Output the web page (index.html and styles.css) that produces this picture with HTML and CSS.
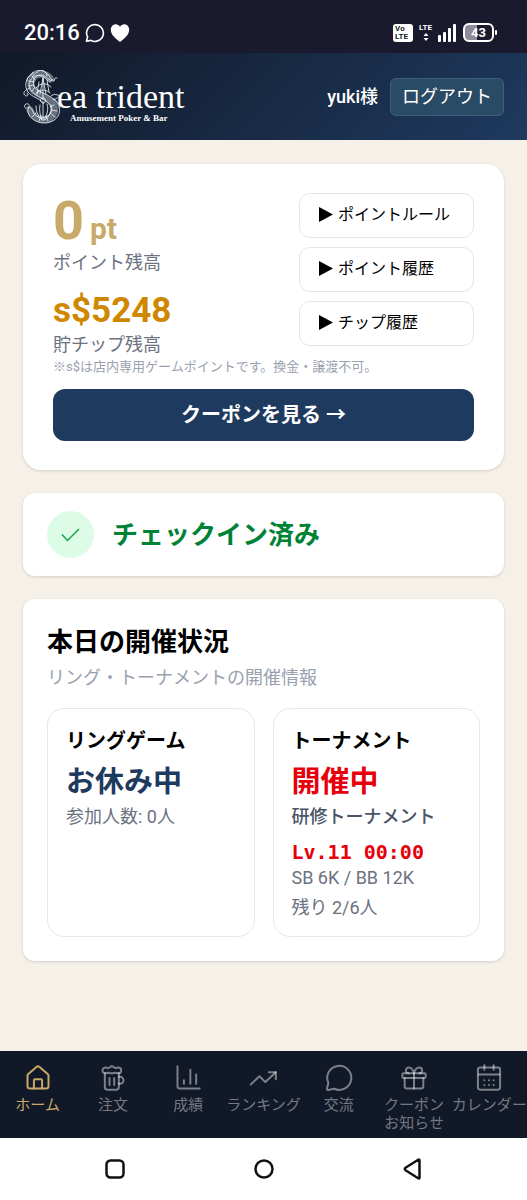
FILE: index.html
```html
<!DOCTYPE html>
<html lang="ja">
<head>
<meta charset="utf-8">
<meta name="viewport" content="width=device-width, initial-scale=1">
<title>Sea trident</title>
<link rel="stylesheet" href="styles.css">
</head>
<body>
<div class="status-bar">
  <div class="status-group">
    <span class="clock">20:16</span>
    <svg width="20" height="20" viewBox="0 0 20 20" fill="none" stroke="#fff" stroke-width="1.6" stroke-linejoin="round"><path d="M1.4 18.2 2.6 14A8.4 8.4 0 1 1 6 17.4Z"/></svg>
    <svg width="20" height="20" viewBox="0 0 20 20" fill="#fff"><path d="M10 19C7 16.500 .8 12.500 .8 6.800.8 3.500 3 1.200 5.700 1.200 7.500 1.200 9.200 2.200 10 3.800 10.800 2.200 12.500 1.200 14.300 1.200 17 1.200 19.200 3.500 19.200 6.800 19.200 12.500 13 16.500 10 19Z"/></svg>
  </div>
  <div class="status-group status-right">
    <span class="volte">Vo<br>LTE</span>
    <span class="lte">LTE<svg width="6" height="8" viewBox="0 0 6 8" fill="#fff"><path d="M3 0 5.500 3H.5ZM3 8 5.500 5H.5Z"/></svg></span>
    <svg width="19" height="18" viewBox="0 0 19 18" fill="#fff"><rect y="11" width="3" height="7" rx="1"/><rect x="5" y="8" width="3" height="10" rx="1"/><rect x="10" y="4" width="3" height="14" rx="1"/><rect x="15" width="3" height="18" rx="1"/></svg>
    <span class="battery">43</span>
  </div>
</div>

<header class="header">
  <div class="logo">
    <svg class="logo-mark" width="40" height="54" viewBox="0 0 40 54" fill="none" stroke="#e4eaf0" stroke-linecap="round">
      <g stroke-width="7" opacity=".4"><path d="M27 8C20 1 10 4 8 12 6 22 16 23 24 29 33 34 34 43 27 48 19 52 11 48 7 40"/></g>
      <g stroke-width=".9">
        <path d="M34 8c-2-1-3 1-2 2-6 1-4-5-9-7-4-4-10-3-13 0-6 3-9 11-6 17 2 6 10 7 17 13"/>
        <path d="M31 11c-6 0-7-5-12-6-7-1-10 6-8 11 2 5 9 6 15 10 9 5 13 13 9 20-4 7-15 9-22 5-7-3-10-10-7-14 1-2-1-4-3-3-3 2-1 5 1 4"/>
        <path d="M5 37c3 0 4 2 5 5 3 6 11 8 16 3 6-6 1-12-6-16C14 25 7 23 6 15c0-6 6-11 12-9 5 1 6 6 10 6"/>
        <path d="M7 18c-6 2-8 6-4 8 3 0 2-3 1-3M10 2c-1 4-6 3-6 9M17 0c-2 3-5 2-7 6M18 0c4 1 6 3 6 6"/>
        <path d="M20 7v21M17 24l3-16 3 16M14 24l2-12M26 22l-2-12M13 18c4-5 10-6 15-1M13 23c5-4 10-4 14 0"/>
        <path d="M20 28c-4 0-3 5 0 5s4-5 0-5ZM20 33v17M17 35c-1 5 0 10 2 15M24 34c2 5 0 11-3 16M13 36c0 7 3 11 6 14M28 35c1 7-2 12-6 15"/>
        <path d="M28 26c3-3 6-1 10 0-4 1-5 4-8 3 4 1 6 5 7 8"/>
        <path d="M9 6l3 4M6 11l5 1M6 16l5-1M9 21l3-4M14 24l2-4M31 35l-4 2M34 41l-6-1M32 47l-5-4M25 51l-2-5M16 51l2-5M9 47l4-4"/>
      </g>
    </svg>
    <div class="logo-text"><span class="logo-name">ea trident</span><span class="logo-tag">Amusement Poker &amp; Bar</span></div>
  </div>
  <div class="account">
    <span class="user">yuki様</span>
    <button class="logout" type="button">ログアウト</button>
  </div>
</header>

<main class="main">
  <section class="card points">
    <div class="points-top">
      <div class="balances">
        <p class="point-value">0 <span class="unit">pt</span></p>
        <p class="label">ポイント残高</p>
        <p class="chip-value">s$5248</p>
        <p class="label">貯チップ残高</p>
      </div>
      <div class="links">
        <button class="link-button" type="button"><svg class="tri" viewBox="0 0 14 15"><path d="M0 0 14 7.500 0 15Z"/></svg>ポイントルール</button>
        <button class="link-button" type="button"><svg class="tri" viewBox="0 0 14 15"><path d="M0 0 14 7.500 0 15Z"/></svg>ポイント履歴</button>
        <button class="link-button" type="button"><svg class="tri" viewBox="0 0 14 15"><path d="M0 0 14 7.500 0 15Z"/></svg>チップ履歴</button>
      </div>
    </div>
    <p class="note">※s$は店内専用ゲームポイントです。換金・譲渡不可。</p>
    <button class="coupon" type="button">クーポンを見る →</button>
  </section>

  <section class="card checkin">
    <span class="check"><svg width="19" height="14" viewBox="0 0 19 14" fill="none" stroke="#16a34a" stroke-width="1.500"><path d="M1 6.500 6.500 12.500 18 1"/></svg></span>
    <h2 class="checkin-text">チェックイン済み</h2>
  </section>

  <section class="card today">
    <h2 class="today-title">本日の開催状況</h2>
    <p class="today-sub">リング・トーナメントの開催情報</p>
    <div class="games">
      <article class="game">
        <h3 class="game-title">リングゲーム</h3>
        <p class="game-status closed">お休み中</p>
        <p class="game-line">参加人数: 0人</p>
      </article>
      <article class="game">
        <h3 class="game-title">トーナメント</h3>
        <p class="game-status open">開催中</p>
        <p class="game-line name">研修トーナメント</p>
        <p class="level">Lv.11 00:00</p>
        <p class="game-line">SB 6K / BB 12K</p>
        <p class="game-line remain">残り 2/6人</p>
      </article>
    </div>
  </section>
</main>

<nav class="nav">
  <a class="nav-item active" href="#"><svg class="icon" viewBox="0 0 24 24"><path d="M3 10a2 2 0 0 1 .7-1.500l7-6a2 2 0 0 1 2.600 0l7 6A2 2 0 0 1 21 10v9a2 2 0 0 1-2 2H5a2 2 0 0 1-2-2Z"/><path d="M15.500 21v-7a1 1 0 0 0-1-1h-5a1 1 0 0 0-1 1v7"/></svg><span>ホーム</span></a>
  <a class="nav-item" href="#"><svg class="icon" viewBox="0 0 24 24"><path d="M17 11h1a3 3 0 0 1 0 6h-1"/><path d="M9 12v6"/><path d="M13 12v6"/><path d="M14 7.500c-1 0-1.440.5-3 .5s-2-.5-3-.5-1.720.5-2.500.5a2.500 2.500 0 0 1 0-5c.78 0 1.570.5 2.500.5S9.440 2 11 2s2 1.500 3 1.500 1.720-.5 2.500-.5a2.500 2.500 0 0 1 0 5c-.78 0-1.500-.5-2.500-.5Z"/><path d="M5 8v12a2 2 0 0 0 2 2h8a2 2 0 0 0 2-2V8"/></svg><span>注文</span></a>
  <a class="nav-item" href="#"><svg class="icon" viewBox="0 0 24 24"><path d="M3 2v17a2 2 0 0 0 2 2h17"/><path d="M19 17V9"/><path d="M14 17V5"/><path d="M8.500 17v-3"/></svg><span>成績</span></a>
  <a class="nav-item" href="#"><svg class="icon" viewBox="0 0 24 24"><path d="M23 7 14 15.500 9 10.500 1.500 17.500"/><path d="M17 7h6v6"/></svg><span>ランキング</span></a>
  <a class="nav-item" href="#"><svg class="icon" viewBox="0 0 24 24"><path d="M7.900 21.200A10.300 10.300 0 1 0 2.900 16.200L1.600 21.300Q1.600 22.400 2.700 22.300Z"/></svg><span>交流</span></a>
  <a class="nav-item" href="#"><svg class="icon" viewBox="0 0 24 24"><rect x="2" y="8" width="20" height="4" rx="1"/><path d="M12 8v13"/><path d="M20 12v7a2 2 0 0 1-2 2H6a2 2 0 0 1-2-2v-7"/><path d="M7.500 8a2.500 2.500 0 0 1 0-5A4.800 8 0 0 1 12 8a4.800 8 0 0 1 4.500-5 2.500 2.500 0 0 1 0 5"/></svg><span>クーポン<br>お知らせ</span></a>
  <a class="nav-item" href="#"><svg class="icon" viewBox="0 0 24 24"><path d="M8 1v4"/><path d="M16 1v4"/><rect x="2.500" y="3" width="19" height="19" rx="2"/><path d="M3 9h18"/><path d="M8 14h.01M12 14h.01M16 14h.01M8 18h.01M12 18h.01M16 18h.01"/></svg><span>カレンダー</span></a>
</nav>

<div class="system-bar">
  <button class="sys" type="button" aria-label="履歴"><svg width="20" height="20" viewBox="0 0 20 20"><rect x="1.500" y="1.500" width="17" height="17" rx="4"/></svg></button>
  <button class="sys" type="button" aria-label="ホーム"><svg width="20" height="20" viewBox="0 0 20 20"><circle cx="10" cy="10" r="8.500"/></svg></button>
  <button class="sys" type="button" aria-label="戻る"><svg width="20" height="22" viewBox="0 0 20 22"><path d="M16.500 2.500v17q0 1.500-1.300.7L2.500 12.200q-1.400-1.200 0-2.400L15.200 1.800q1.300-.8 1.300.7Z"/></svg></button>
</div>
</body>
</html>
```
FILE: styles.css
```css
* { box-sizing: border-box; }
body {
  margin: 0;
  min-height: 100vh;
  display: flex;
  flex-direction: column;
  background: #f5f0e8;
  color: #000;
  font-family: Roboto, "Noto Sans CJK JP", sans-serif;
  font-size: 18px;
  line-height: 26px;
}
p, h2, h3 { margin: 0; }
button { font: inherit; cursor: pointer; }

.status-bar {
  display: flex;
  justify-content: space-between;
  align-items: center;
  height: 53px;
  padding: 12px 33px 0 24px;
  background: #1a1a2e;
  color: #fff;
}
.status-group { display: flex; align-items: center; gap: 5px; }
.status-right { gap: 6px; }
.clock { font-size: 22px; font-weight: 500; }
.volte {
  width: 20px;
  padding: 1px 2px;
  border-radius: 3px;
  background: #fff;
  color: #1a1a2e;
  font-size: 8px;
  font-weight: 700;
  line-height: 8px;
}
.lte {
  display: flex;
  flex-direction: column;
  align-items: center;
  gap: 1px;
  font-size: 8px;
  font-weight: 700;
  line-height: 8px;
}
.battery {
  position: relative;
  width: 31px;
  height: 19px;
  border: 2px solid #fff;
  border-radius: 6px;
  background: linear-gradient(90deg, #8d8c98 45%, #1a1a2e 45%);
  font-size: 13px;
  font-weight: 700;
  line-height: 15px;
  text-align: center;
}
.battery::after {
  content: "";
  position: absolute;
  right: -5px;
  top: 5px;
  width: 2px;
  height: 5px;
  border-radius: 1px;
  background: #fff;
}

.header {
  display: flex;
  justify-content: space-between;
  align-items: center;
  min-height: 87px;
  padding: 0 23px;
  background: linear-gradient(135deg, #111827, #1e3a5f);
  color: #fff;
}
.logo { display: flex; align-items: center; }
.logo-mark { margin-right: -6px; }
.logo-text {
  display: flex;
  flex-direction: column;
  padding-top: 13px;
  font-family: "Liberation Serif", serif;
}
.logo-name { font-size: 34px; line-height: 30px; }
.logo-tag { padding-left: 13px; font-size: 9px; font-weight: 700; line-height: 12px; }
.account { display: flex; align-items: center; gap: 12px; font-weight: 500; }
.logout {
  height: 38px;
  padding: 0 11px;
  border: 1px solid #3d6078;
  border-radius: 6px;
  background: #2a4b66;
  color: #fff;
  font-weight: 400;
}

.main {
  flex: 1;
  display: flex;
  flex-direction: column;
  gap: 23px;
  padding: 24px 23px;
}
.card {
  border-radius: 12px;
  background: #fff;
  box-shadow: 0 1px 3px rgba(0, 0, 0, .14);
}
.points { padding: 29px 30px; border-radius: 18px; }
.points-top { display: flex; justify-content: space-between; }
.point-value {
  padding-bottom: 1px;
  color: #c9a96a;
  font-size: 54px;
  font-weight: 700;
  line-height: 56px;
  display: flex;
  align-items: baseline;
  gap: 6px;
}
.unit { font-size: 30px; line-height: 30px; }
.label { color: #6b7280; }
.chip-value {
  margin-top: 14px;
  color: #d08700;
  font-size: 35px;
  font-weight: 700;
  line-height: 42px;
}
.links { display: flex; flex-direction: column; gap: 9px; width: 175px; }
.link-button {
  display: flex;
  align-items: center;
  gap: 5px;
  height: 45px;
  padding: 0 0 2px 19px;
  border: 1px solid #e5e5e5;
  border-radius: 11px;
  background: #fff;
  color: #000;
  font-size: 16px;
}
.tri { width: 14px; height: 15px; }
.note { color: #99a1af; font-size: 13px; line-height: 18px; }
.coupon {
  display: block;
  width: 100%;
  height: 52px;
  margin-top: 13px;
  border: 0;
  border-radius: 12px;
  background: #1e3a5f;
  color: #fff;
  font-size: 20px;
  font-weight: 700;
}

.checkin { display: flex; align-items: center; gap: 18px; padding: 18px 24px; }
.check {
  display: flex;
  align-items: center;
  justify-content: center;
  width: 47px;
  height: 47px;
  border-radius: 50%;
  background: #dcfce7;
}
.checkin-text { color: #008236; font-size: 26px; line-height: 36px; }

.today { padding: 24px; }
.today-title { font-size: 26px; line-height: 38px; }
.today-sub { margin-top: 4px; color: #99a1af; }
.games {
  display: grid;
  grid-template-columns: 1fr 1fr;
  gap: 18px;
  margin-top: 17px;
}
.game { padding: 18px 18px 15px; border: 1px solid #e5e7eb; border-radius: 17px; }
.game-title { font-size: 20px; line-height: 28px; }
.game-status { margin: 9px 0 4px; font-size: 29px; font-weight: 700; line-height: 36px; }
.closed { color: #1e3a5f; }
.open { color: #e7000b; }
.game-line { color: #6b7280; }
.name { color: #4a5565; font-weight: 500; }
.level {
  margin-top: 9px;
  color: #e7000b;
  font-family: "DejaVu Sans Mono", monospace;
  font-size: 20px;
  font-weight: 700;
}
.remain { margin-top: 4px; }

.nav {
  display: grid;
  grid-template-columns: repeat(7, 1fr);
  padding: 13px 0 6px;
  background: #111827;
}
.nav-item {
  display: flex;
  flex-direction: column;
  align-items: center;
  min-width: 0;
  color: #747983;
  font-size: 15px;
  line-height: 18px;
  text-align: center;
  text-decoration: none;
  white-space: nowrap;
}
.icon {
  width: 28px;
  height: 28px;
  margin-bottom: 4px;
  fill: none;
  stroke: rgba(255, 255, 255, .45);
  stroke-width: 1.700;
  stroke-linecap: round;
  stroke-linejoin: round;
}
.active { color: #c9a96a; }
.active .icon { stroke: #c9a96a; }

.system-bar {
  display: grid;
  grid-template-columns: repeat(3, 1fr);
  height: 62px;
  padding: 0 40px;
  background: #fff;
}
.sys { display: flex; align-items: center; justify-content: center; padding: 0; border: 0; background: none; }
.sys svg { fill: none; stroke: #111; stroke-width: 2.500; stroke-linejoin: round; }
```
